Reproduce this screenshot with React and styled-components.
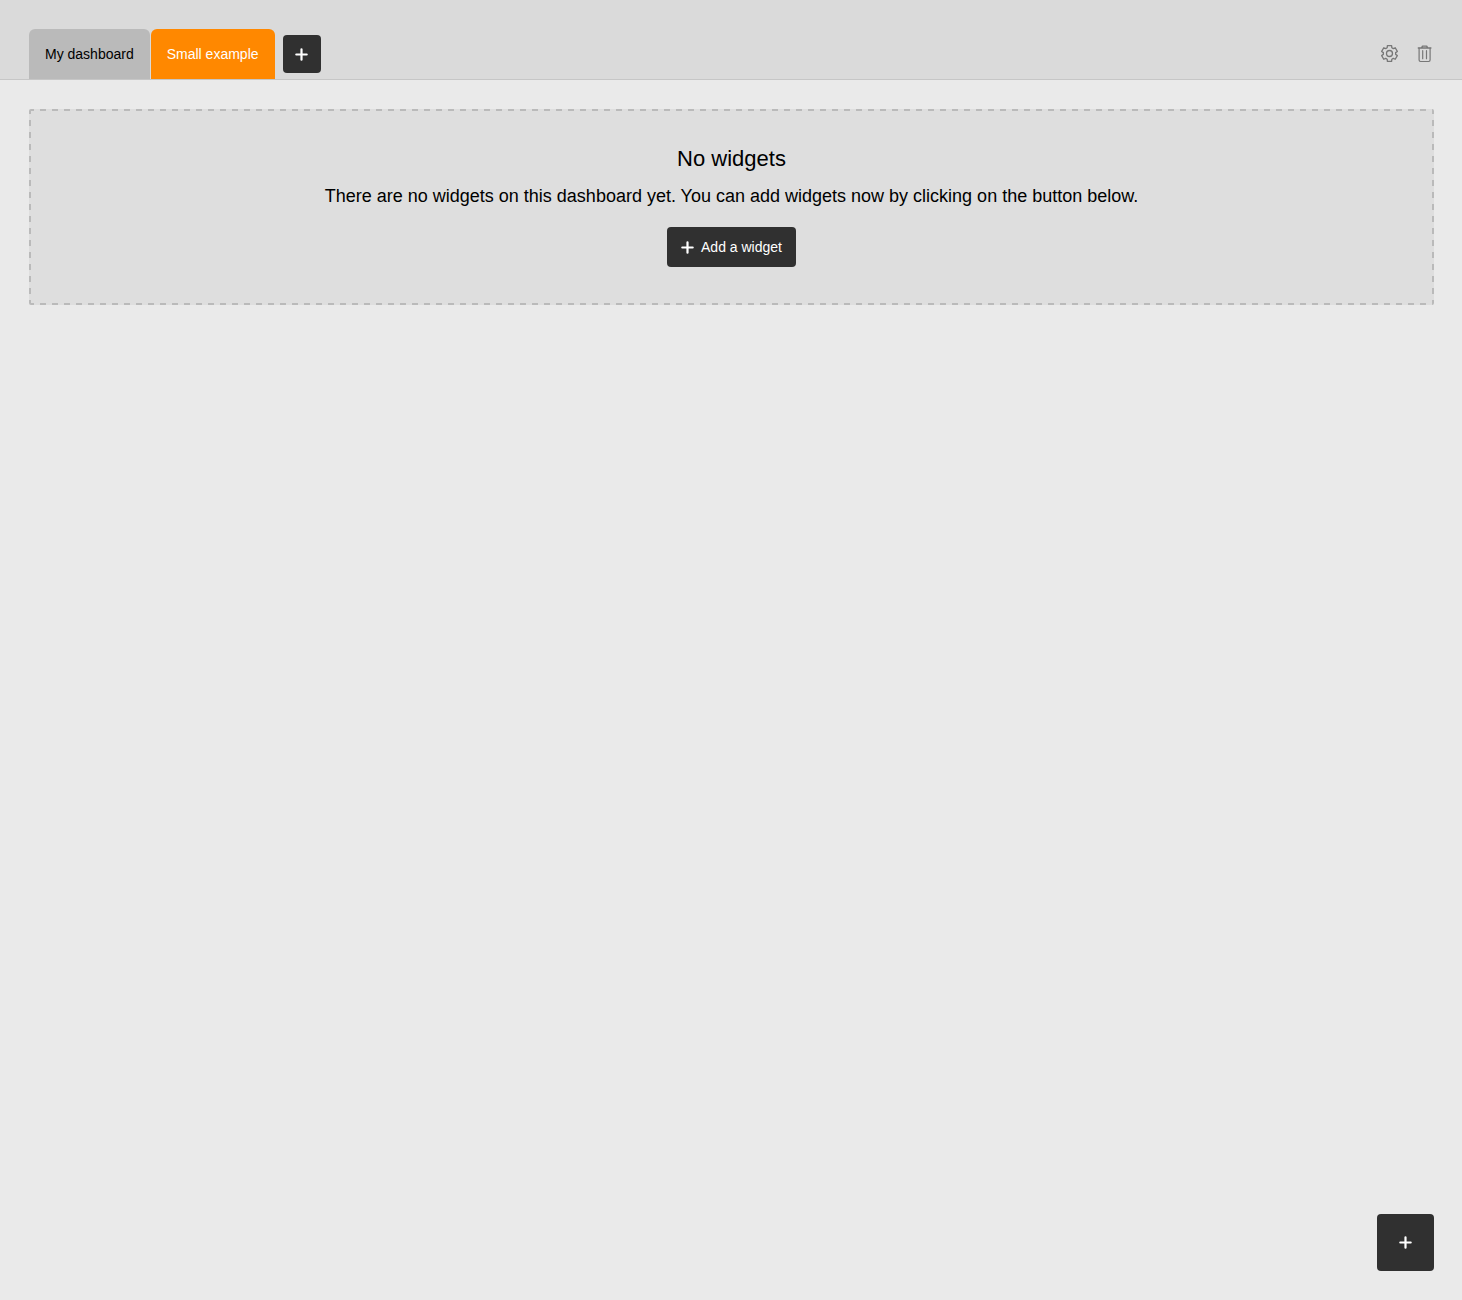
import React from 'react';
import styled, { createGlobalStyle } from 'styled-components';

const GlobalStyle = createGlobalStyle`
  * {
    box-sizing: border-box;
  }

  body {
    margin: 0;
    background: #eaeaea;
    color: #000;
    font: 18px/24px "Liberation Sans", Arial, sans-serif;
  }
`;

const TopBar = styled.header`
  display: flex;
  justify-content: space-between;
  padding: 29px 28px 0 29px;
  background: #dadada;
  border-bottom: 1px solid #c6c6c6;
`;

const Tabs = styled.nav`
  display: flex;
  gap: 1px;
`;

const Tab = styled.a`
  display: flex;
  align-items: center;
  height: 50px;
  padding: 0 16px;
  border-radius: 6px 6px 0 0;
  background: ${({ $active }) => ($active ? '#ff8800' : '#bababa')};
  color: ${({ $active }) => ($active ? '#fff' : '#000')};
  font-size: 14px;
  text-decoration: none;
`;

const DarkButton = styled.button`
  display: inline-flex;
  align-items: center;
  justify-content: center;
  gap: 7px;
  height: 40px;
  padding: 0 14px;
  border: 0;
  border-radius: 4px;
  background: #303030;
  color: #fff;
  font-family: inherit;
  font-size: 14px;
  cursor: pointer;
`;

const AddTabButton = styled(DarkButton)`
  width: 38px;
  height: 38px;
  margin: 6px 0 0 7px;
  padding: 0;
`;

const FloatingButton = styled(DarkButton)`
  position: fixed;
  right: 28px;
  bottom: 29px;
  width: 57px;
  height: 57px;
  padding: 0;
`;

const Actions = styled.div`
  display: flex;
  align-items: center;
  gap: 17px;
`;

const IconButton = styled.button`
  display: flex;
  padding: 0;
  border: 0;
  background: none;
  color: #777;
  cursor: pointer;
`;

const Main = styled.main`
  padding: 29px 28px 29px 29px;
`;

// The dashed outline is drawn with gradients so that dash and gap are equally long.
const EmptyState = styled.section`
  display: flex;
  flex-direction: column;
  align-items: center;
  padding: 38px;
  border-radius: 2px;
  background:
    linear-gradient(90deg, #bababa 50%, transparent 50%) -1px 0 / 12px 2px repeat-x,
    linear-gradient(90deg, #bababa 50%, transparent 50%) -1px 100% / 12px 2px repeat-x,
    linear-gradient(#bababa 50%, transparent 50%) 0 -1px / 2px 12px repeat-y,
    linear-gradient(#bababa 50%, transparent 50%) 100% -1px / 2px 12px repeat-y,
    #dedede;
  text-align: center;
`;

const Title = styled.h1`
  margin: 0 0 13px;
  font-size: 22px;
  font-weight: 400;
  line-height: 24px;
`;

const Message = styled.p`
  margin: 0 0 19px;
`;

function PlusIcon() {
  return (
    <svg width="13" height="13" viewBox="0 0 13 13" fill="none" stroke="currentColor" strokeWidth="2.2" strokeLinecap="round" aria-hidden="true">
      <path d="M6.5 1.3v10.4M1.3 6.5h10.4" />
    </svg>
  );
}

// Each tooth is four points: base, tip, tip, base.
const gearPoints = Array.from({ length: 6 }, (_, tooth) =>
  [[-22, 6.2], [-15, 8.1], [15, 8.1], [22, 6.2]].map(([offset, radius]) => {
    const angle = ((tooth * 60 - 90 + offset) * Math.PI) / 180;
    return `${(8.5 + radius * Math.cos(angle)).toFixed(2)},${(8.5 + radius * Math.sin(angle)).toFixed(2)}`;
  })
).flat().join(' ');

function GearIcon() {
  return (
    <svg width="18" height="18" viewBox="0 0 18 18" fill="none" stroke="currentColor" strokeWidth="1.3" strokeLinejoin="round" aria-hidden="true">
      <polygon points={gearPoints} />
      <circle cx="8.5" cy="8.5" r="3" />
    </svg>
  );
}

function TrashIcon() {
  return (
    <svg width="18" height="18" viewBox="0 0 18 18" fill="none" stroke="currentColor" strokeWidth="1.2" strokeLinecap="round" strokeLinejoin="round" aria-hidden="true">
      <path d="M2.3 3h12.6M5.6 2.8l.9-1.7h4.2l.9 1.7" strokeWidth="1.4" />
      <path d="M3.1 3.4v11.7q0 1.4 1.4 1.4h8.2q1.4 0 1.4-1.4V3.4M6.7 5.7v8M10.5 5.7v8" />
    </svg>
  );
}

export default function App() {
  return (
    <>
      <GlobalStyle />
      <TopBar>
        <Tabs aria-label="Dashboards">
          <Tab href="#my-dashboard">My dashboard</Tab>
          <Tab href="#small-example" $active aria-current="page">Small example</Tab>
          <AddTabButton type="button" aria-label="Add a dashboard"><PlusIcon /></AddTabButton>
        </Tabs>
        <Actions>
          <IconButton type="button" aria-label="Settings"><GearIcon /></IconButton>
          <IconButton type="button" aria-label="Delete dashboard"><TrashIcon /></IconButton>
        </Actions>
      </TopBar>
      <Main>
        <EmptyState>
          <Title>No widgets</Title>
          <Message>There are no widgets on this dashboard yet. You can add widgets now by clicking on the button below.</Message>
          <DarkButton type="button"><PlusIcon />Add a widget</DarkButton>
        </EmptyState>
      </Main>
      <FloatingButton type="button" aria-label="Add a widget"><PlusIcon /></FloatingButton>
    </>
  );
}
